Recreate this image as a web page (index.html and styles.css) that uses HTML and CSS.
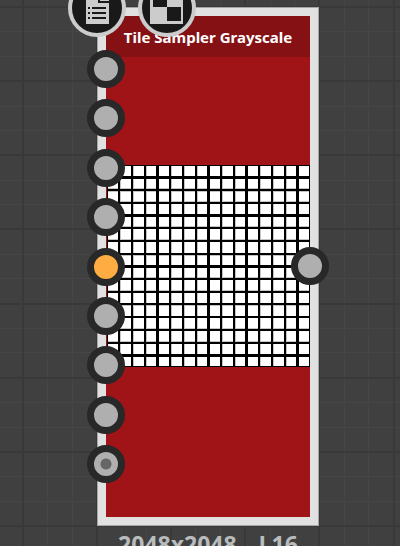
FILE: index.html
```
<!DOCTYPE html>
<html lang="en">
<head>
<meta charset="utf-8">
<title>Node graph</title>
<link rel="stylesheet" href="styles.css">
</head>
<body>
<main class="canvas">
  <svg class="grid" aria-hidden="true">
    <path class="minor" d="M47 0V2000M72 0V2000M121 0V2000M146 0V2000M195 0V2000M220 0V2000M270 0V2000M294 0V2000M344 0V2000M368 0V2000M0 31H2000M0 56H2000M0 106H2000M0 130H2000M0 180H2000M0 204H2000M0 254H2000M0 278H2000M0 328H2000M0 352H2000M0 402H2000M0 427H2000M0 476H2000M0 501H2000"/>
    <path class="major" d="M23 0V2000M97 0V2000M171 0V2000M245 0V2000M319 0V2000M394 0V2000M0 7H2000M0 81H2000M0 155H2000M0 229H2000M0 304H2000M0 378H2000M0 452H2000M0 526H2000"/>
  </svg>
  <article class="node">
    <div class="body">
      <h1 class="title">Tile Sampler Grayscale</h1>
      <div class="preview">
        <svg class="tiles" viewBox="0 0 203 202" role="img" aria-label="Tile preview">
          <path class="shade" d="M13 0h1v202h-1zM26 0h1v202h-1zM39 0h1v202h-1zM64 0h1v202h-1zM77 0h1v202h-1zM90 0h1v202h-1zM115 0h1v202h-1zM128 0h1v202h-1zM153 0h1v202h-1zM166 0h1v202h-1zM179 0h1v202h-1zM0 23h203v1H0zM0 26h203v1H0zM0 36h203v1H0zM0 61h203v1H0zM0 74h203v1H0zM0 90h203v1H0zM0 112h203v1H0zM0 125h203v1H0zM0 140h203v1H0zM0 163h203v1H0zM0 176h203v1H0z"/>
          <path class="line" d="M12 0V202M25 0V202M38 0V202M63 0V202M76 0V202M89 0V202M114 0V202M127 0V202M152 0V202M165 0V202M178 0V202M0 25H203M0 38H203M0 63H203M0 76H203M0 89H203M0 114H203M0 127H203M0 139H203M0 165H203M0 178H203"/>
          <path class="wide" d="M49 0h3v202h-3zM100 0h3v202h-3zM138 0h3v202h-3zM189 0h3v202h-3zM0 11h203v3H0zM0 49h203v3H0zM0 100h203v3H0zM0 151h203v2H0zM0 189h203v3H0zM0 0h203v1H0zM0 201h203v1H0zM0 0h1v202H0zM202 0h1v202h-1z"/>
        </svg>
      </div>
    </div>
    <div class="inputs">
      <button class="port" aria-label="Input 1"></button>
      <button class="port" aria-label="Input 2"></button>
      <button class="port" aria-label="Input 3"></button>
      <button class="port" aria-label="Input 4"></button>
      <button class="port active" aria-label="Input 5"></button>
      <button class="port" aria-label="Input 6"></button>
      <button class="port" aria-label="Input 7"></button>
      <button class="port" aria-label="Input 8"></button>
      <button class="port dotted" aria-label="Input 9"></button>
    </div>
    <button class="port output" aria-label="Output"></button>
    <div class="badges">
      <button class="badge" aria-label="Parameters">
        <svg viewBox="0 0 58 58"><path fill="#ccc" d="M18 13h15l8 8v24H18z"/><path fill="#191919" d="M20 28h2v2h-2zM24 28h14v2H24zM20 33h2v2h-2zM24 33h14v2H24zM20 38h2v2h-2zM24 38h14v2H24zM30 13h2v9h9v2H30z"/></svg>
      </button>
      <button class="badge" aria-label="Pixel format">
        <svg viewBox="0 0 58 58"><path fill="#ccc" d="M12 12h33v33H12z"/><path fill="#191919" d="M15 14h14v14H15zM29 28h14v14H29z"/></svg>
      </button>
    </div>
    <p class="info"><span>2048x2048</span><span>L16</span></p>
  </article>
</main>
</body>
</html>
```
FILE: styles.css
```
* { box-sizing: border-box; }
html, body { height: 100%; }
body {
  margin: 0;
  background: #404040;
  font-family: "Open Sans", "Noto Sans", sans-serif;
}
.canvas {
  position: relative;
  height: 100vh;
  overflow: hidden;
}
.grid {
  position: absolute;
  inset: 0;
  width: 100%;
  height: 100%;
}
.grid path { fill: none; shape-rendering: crispEdges; }
.minor { stroke: #464646; stroke-width: 1; }
.major { stroke: #393939; stroke-width: 2; }
.node {
  position: absolute;
  left: 97px;
  top: 7px;
  width: 222px;
}
.body {
  display: flex;
  flex-direction: column;
  height: 519px;
  border: 9px solid #e1e1e1;
  outline: 1px solid #a5a5a5;
  outline-offset: -1px;
  background: #a01316;
}
.title {
  margin: 0;
  height: 41px;
  background: #851114;
  color: #fff;
  font-family: "Noto Sans", "Open Sans", sans-serif;
  font-size: 15px;
  line-height: 42px;
  font-weight: 700;
  text-align: center;
  white-space: nowrap;
}
.preview {
  flex: 1;
  padding: 108px 0 0 1px;
}
.tiles {
  display: block;
  width: 100%;
  background: #fff;
  shape-rendering: crispEdges;
}
.shade { fill: #c4c4c4; }
.line { stroke: #000; stroke-width: 2; }
.wide { fill: #000; }
.inputs {
  position: absolute;
  left: -10px;
  top: 43px;
  display: grid;
  grid-template-rows: repeat(9, 38px);
  height: 433px;
  align-content: space-between;
}
.port {
  display: block;
  width: 38px;
  height: 38px;
  padding: 0;
  border: 7px solid #282828;
  border-radius: 50%;
  background: #afafaf;
}
.active { background: #ffad42; }
.dotted { background: radial-gradient(circle, #666 5px, #afafaf 6px); }
.output {
  position: absolute;
  right: -10px;
  top: 240px;
}
.badges {
  position: absolute;
  left: -29px;
  top: -28px;
  display: flex;
  gap: 12px;
}
.badge {
  width: 58px;
  height: 58px;
  padding: 0;
  border: 4px solid #ccc;
  border-radius: 50%;
  background: #191919;
}
.badge svg { display: block; width: 58px; height: 58px; margin: -4px; }
.info {
  display: flex;
  justify-content: center;
  gap: 22px;
  margin: 0;
  color: #b8bcbc;
  font-size: 23px;
  line-height: 36px;
  font-weight: 700;
}
```
